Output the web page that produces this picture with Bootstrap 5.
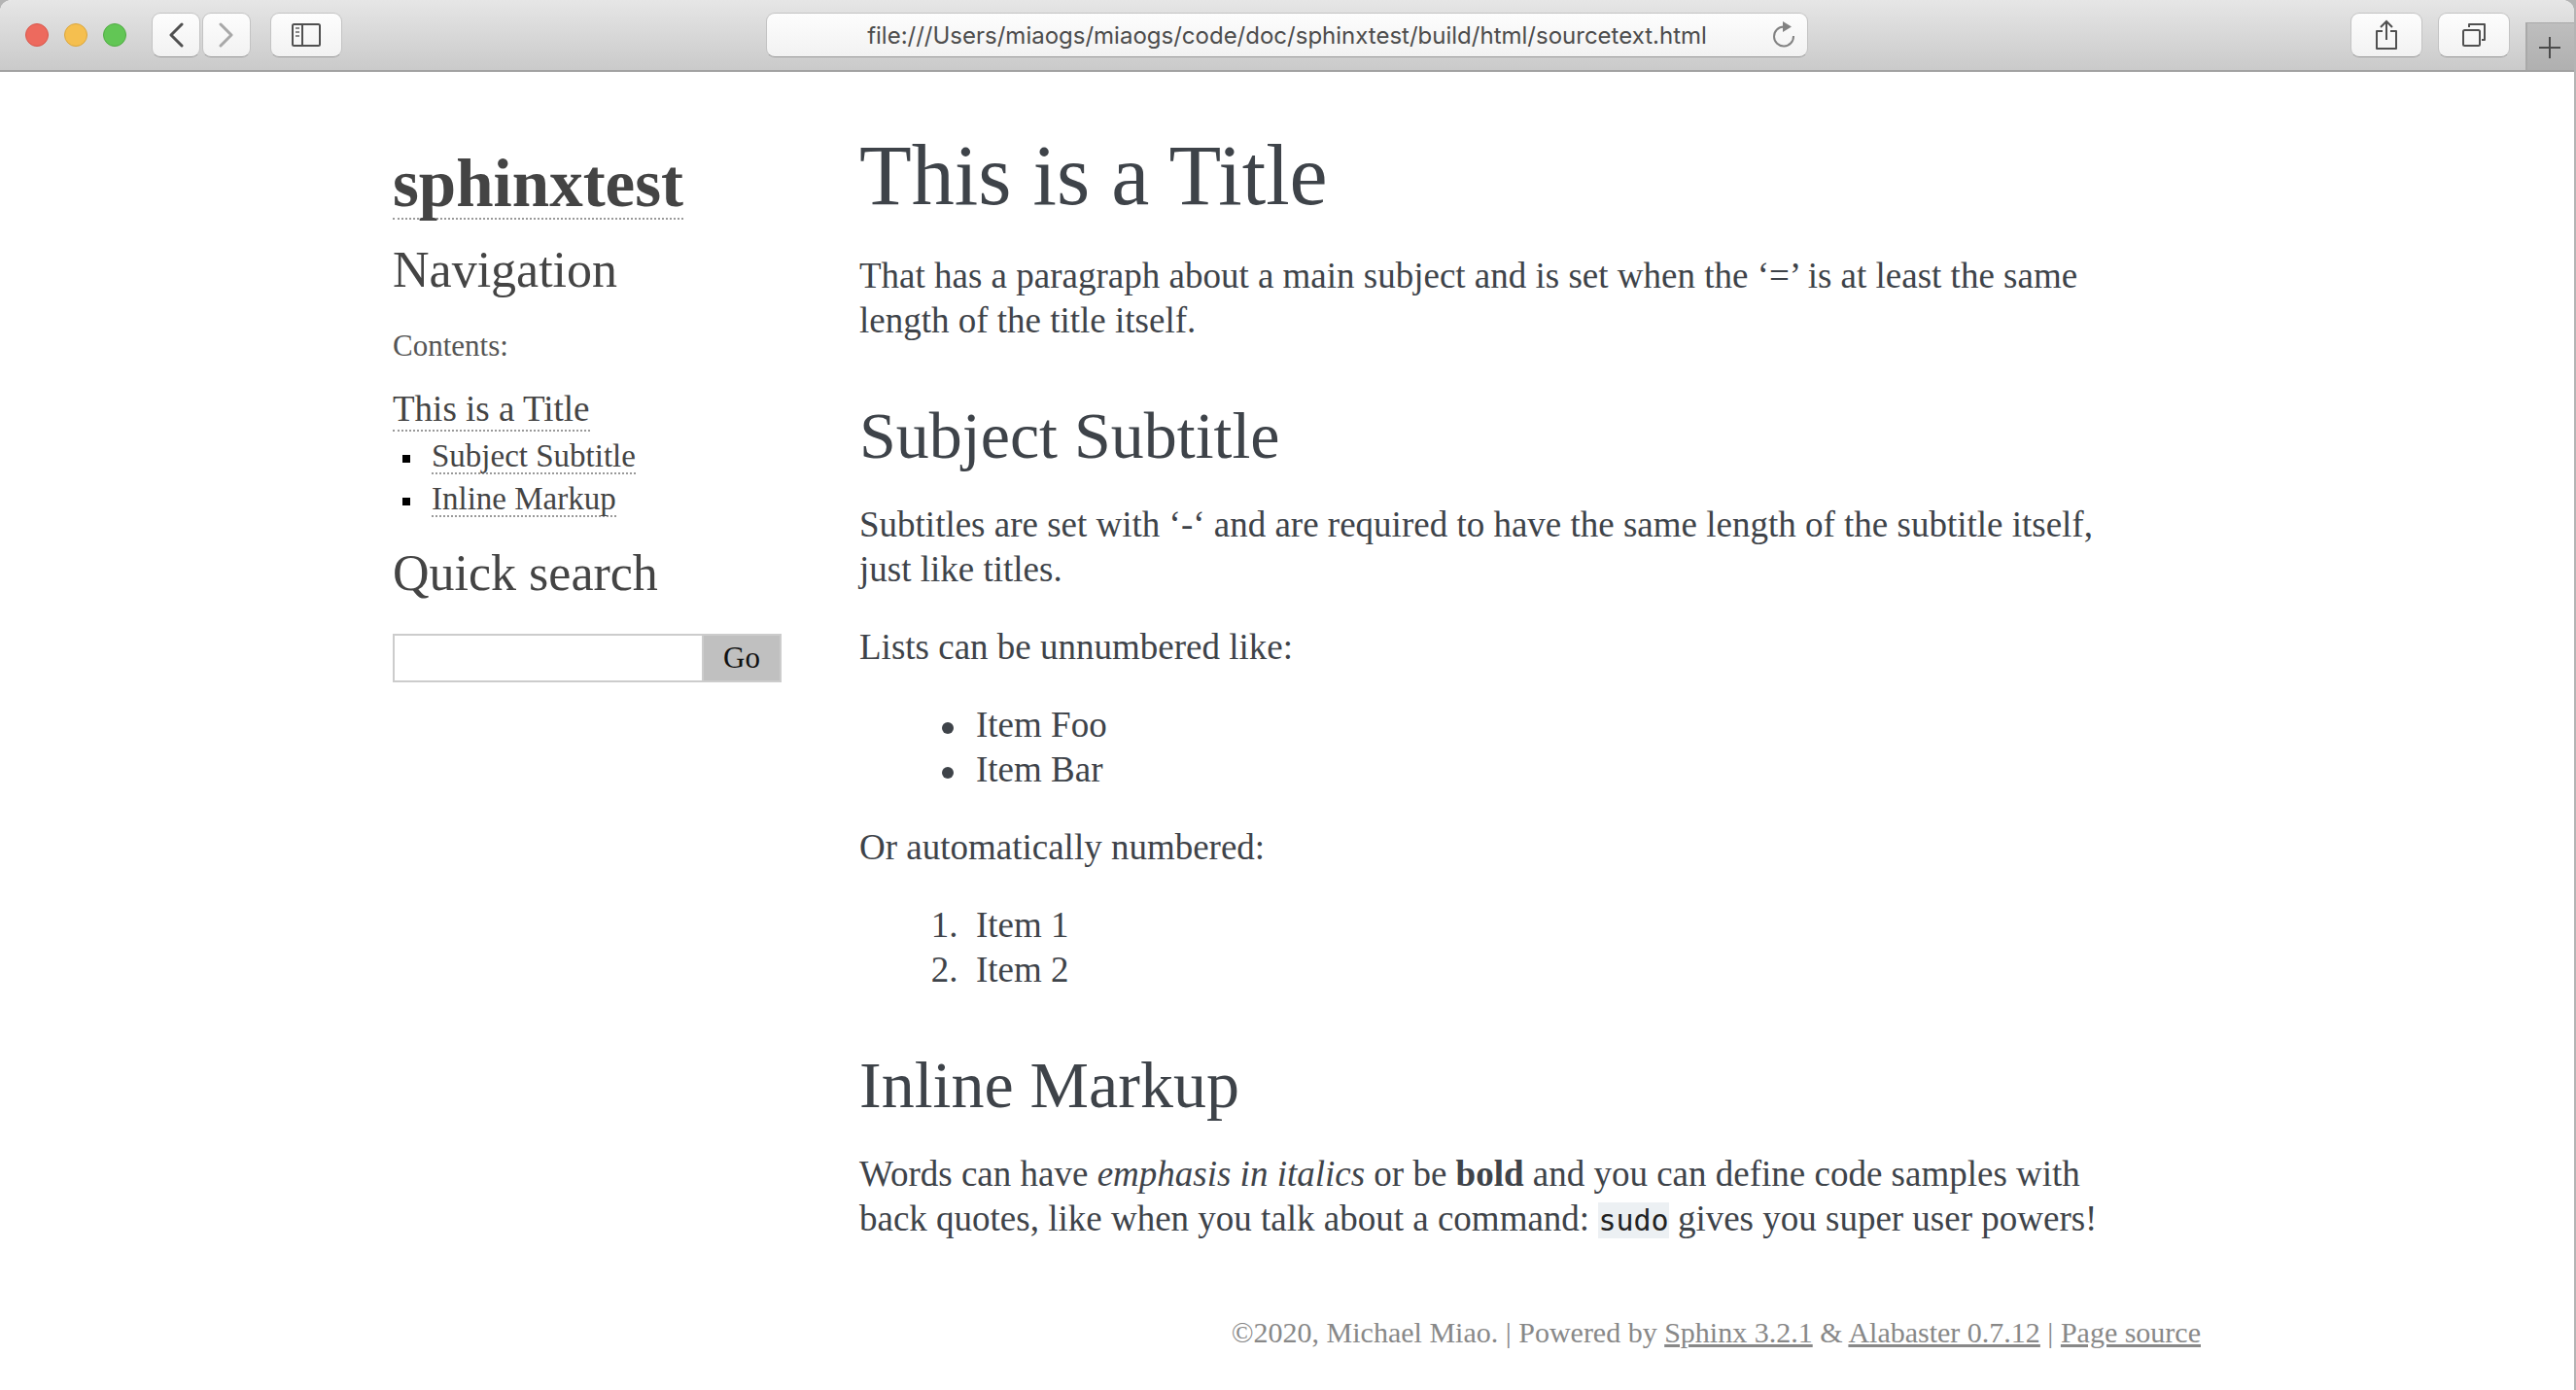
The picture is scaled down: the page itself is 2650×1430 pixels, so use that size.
<!DOCTYPE html>
<html lang="en">
<head>
<meta charset="utf-8">
<meta name="viewport" content="width=device-width, initial-scale=1">
<title>This is a Title — sphinxtest documentation</title>
<link rel="stylesheet" href="https://cdn.jsdelivr.net/npm/bootstrap@5.3.0/dist/css/bootstrap.min.css">
<style>
  body { background: #b4b4b4; color: #3e4349; font: 37px/46px "Liberation Serif", Georgia, serif; }
  .window { min-height: 100vh; margin-right: 2px; background: #fff; border-radius: 12px 12px 0 0; overflow: hidden; }

  /* browser toolbar */
  .toolbar { height: 74px; background: linear-gradient(#e6e6e6, #cacaca); border-bottom: 2px solid #a2a2a2; font-family: Inter, sans-serif; }
  .side-group { flex: 1 0 0; height: 100%; padding-top: 13px; }
  .lights { gap: 16px; padding: 0 26px; }
  .light { width: 24px; height: 24px; border-radius: 50%; border: 1px solid; margin-top: 11px; }
  .light-close { background: #ed6a5e; border-color: #d8564b; }
  .light-min { background: #f5bf4f; border-color: #dba63c; }
  .light-max { background: #62c655; border-color: #50ab43; }
  .history { gap: 2px; margin-right: 20px; }
  .tool { height: 46px; padding: 0; border: 1px solid #c3c3c3; border-bottom: 1px solid #989898; border-radius: 9px; background: linear-gradient(#fdfdfd, #f2f2f2); color: #505050; display: flex; align-items: center; justify-content: center; }
  .tool-sm { width: 50px; }
  .tool-lg { width: 74px; }
  .tool-off { color: #a8a8a8; }
  .right-tools { gap: 16px; }
  .address { width: 40.5%; padding-top: 13px; }
  .address-input { display: block; width: 100%; height: 46px; padding: 2px 96px 0; border: 1px solid #c3c3c3; border-bottom-color: #989898; border-radius: 9px; background: linear-gradient(#fdfdfd, #f2f2f2); color: #4c4c4c; font-size: 24px; text-align: center; }
  .reload { right: 12px; top: 20px; width: 26px; height: 30px; padding: 0; border: 0; background: none; color: #828282; }
  .new-tab { width: 50px; height: 49px; margin-top: 10px; padding: 0; border: 0; border-left: 2px solid #a9a9a9; border-top: 1px solid #a9a9a9; background: linear-gradient(#bebebe, #b0b0b0); color: #4c4c4c; }
  svg { display: block; fill: none; stroke: currentColor; stroke-width: 2; }
  .chevron { stroke-width: 3; stroke-linecap: round; stroke-linejoin: round; }

  /* document */
  .doc { max-width: 1880px; margin: 0 auto; padding-top: 57px; }
  .doc-side { flex: 0 0 440px; min-width: 0; padding: 24px 20px 0; color: #444; }
  .doc-body { flex: 1 1 0; min-width: 0; padding: 0 60px; }
  .doc-body h1 { font-size: 88px; line-height: 100px; font-weight: 400; margin: 0 0 30px; }
  .doc-body h2 { font-size: 68px; line-height: 80px; font-weight: 400; margin: 55px 0 29px; }
  .doc-body p { margin: 0 0 34px; }
  .doc-body ul, .doc-body ol { margin: 0 0 34px; padding-left: 120px; }
  .doc-body ul, .toc-sub { list-style: none; }
  .doc-body ul li, .toc-sub li { position: relative; }
  .doc-body ul li::before { content: ""; position: absolute; left: -35px; top: 20px; width: 12px; height: 12px; border-radius: 50%; background: #3e4349; }
  .doc-body ol li::marker { content: counter(list-item) ".\00a0\00a0"; }
  .doc-body code { padding: 1px 0; background: #ecf0f3; color: #222; font: 30px "DejaVu Sans Mono", monospace; }
  .dotted { display: inline-block; color: #444; text-decoration: none; border-bottom: 2px dotted #999; }
  .logo { font-size: 69px; line-height: 69px; font-weight: 700; margin: 0 0 22px; }
  .doc-side h3 { font-size: 52px; line-height: 60px; font-weight: 400; margin: 0; }
  .caption-text { font-size: 31px; line-height: 40px; color: #555; margin: 28px 0 24px; }
  .toc-top { line-height: 42px; }
  .toc-sub { font-size: 33px; line-height: 34px; padding-left: 40px; margin: 0 0 28px; }
  .toc-sub li { margin-top: 8px; }
  .toc-sub li::before { content: ""; position: absolute; left: -30px; top: 16px; width: 8px; height: 8px; background: #000; }
  .search { height: 50px; margin-top: 32px; }
  .search input { flex: 1 1 0; min-width: 0; border: 2px solid #ccc; border-right: 0; padding: 0 8px; font-size: 31px; }
  .search button { width: 82px; border: 2px solid #ccc; background: #c0c0c0; color: #111; font-size: 31px; line-height: 40px; padding: 0; }
  .doc-foot { font-size: 30px; line-height: 40px; color: #888; margin-top: 40px; padding-bottom: 20px; }
  .doc-foot a { color: #888; }
</style>
</head>
<body>
<div class="window">
  <header class="toolbar d-flex">
    <div class="side-group d-flex">
      <div class="lights d-flex">
        <span class="light light-close"></span><span class="light light-min"></span><span class="light light-max"></span>
      </div>
      <div class="history d-flex">
        <button class="tool tool-sm" type="button" aria-label="Back"><svg class="chevron" width="16" height="26" viewBox="0 0 16 26"><path d="M14 2 3 13l11 11"/></svg></button>
        <button class="tool tool-sm tool-off" type="button" aria-label="Forward"><svg class="chevron" width="16" height="26" viewBox="0 0 16 26"><path d="m2 2 11 11L2 24"/></svg></button>
      </div>
      <button class="tool tool-lg" type="button" aria-label="Show sidebar"><svg width="30" height="24" viewBox="0 0 30 24"><rect x="1" y="1" width="28" height="22" rx="1.5"/><path d="M11 1v22"/><path d="M4 5h4M4 9h4M4 13h4" stroke="#8a8a8a"/></svg></button>
    </div>
    <div class="address position-relative">
      <input class="address-input" type="text" aria-label="Address" value="file:///Users/miaogs/miaogs/code/doc/sphinxtest/build/html/sourcetext.html">
      <button class="reload position-absolute" type="button" aria-label="Reload"><svg width="26" height="30" viewBox="0 0 26 30"><path d="M13 7.5A10 10 0 1 0 23 17"/><path d="M12 2l9 5.5-9 5.5z" fill="currentColor" stroke="none"/></svg></button>
    </div>
    <div class="side-group right-tools d-flex justify-content-end">
      <button class="tool tool-lg" type="button" aria-label="Share"><svg width="24" height="32" viewBox="0 0 24 32"><path d="M8 12H2v18h20V12h-6" stroke-linejoin="round"/><path d="M12 21V3M6 8l6-6 6 6"/></svg></button>
      <button class="tool tool-lg" type="button" aria-label="Show all tabs"><svg width="26" height="26" viewBox="0 0 26 26"><rect x="2" y="8" width="17" height="16" rx="1.5"/><path d="M8 5V2h16v16h-3" stroke-linejoin="round"/></svg></button>
      <button class="new-tab" type="button" aria-label="New tab"><svg width="48" height="48" viewBox="0 0 48 48"><path d="M23 14v22M12 25h22"/></svg></button>
    </div>
  </header>

  <div class="doc">
    <div class="d-flex">
      <aside class="doc-side">
        <h1 class="logo"><a class="dotted" href="#">sphinxtest</a></h1>
        <h3>Navigation</h3>
        <p class="caption-text">Contents:</p>
        <nav>
          <a class="dotted toc-top d-table" href="#title">This is a Title</a>
          <ul class="toc-sub">
            <li><a class="dotted" href="#subject">Subject Subtitle</a></li>
            <li><a class="dotted" href="#inline">Inline Markup</a></li>
          </ul>
        </nav>
        <h3><label for="q">Quick search</label></h3>
        <form class="search d-flex">
          <input id="q" type="text">
          <button type="button">Go</button>
        </form>
      </aside>
      <main class="doc-body">
        <h1 id="title">This is a Title</h1>
        <p>That has a paragraph about a main subject and is set when the ‘=’ is at least the same length of the title itself.</p>
        <h2 id="subject">Subject Subtitle</h2>
        <p>Subtitles are set with ‘-‘ and are required to have the same length of the subtitle itself, just like titles.</p>
        <p>Lists can be unnumbered like:</p>
        <ul><li>Item Foo</li><li>Item Bar</li></ul>
        <p>Or automatically numbered:</p>
        <ol><li>Item 1</li><li>Item 2</li></ol>
        <h2 id="inline">Inline Markup</h2>
        <p>Words can have <em>emphasis in italics</em> or be <strong>bold</strong> and you can define code samples with back quotes, like when you talk about a command: <code>sudo</code> gives you super user powers!</p>
      </main>
    </div>
    <footer class="doc-foot text-end">©2020, Michael Miao. | Powered by <a href="#">Sphinx 3.2.1</a> &amp; <a href="#">Alabaster 0.7.12</a> | <a href="#">Page source</a></footer>
  </div>
</div>
<script src="https://cdn.jsdelivr.net/npm/bootstrap@5.3.0/dist/js/bootstrap.bundle.min.js"></script>
</body>
</html>
